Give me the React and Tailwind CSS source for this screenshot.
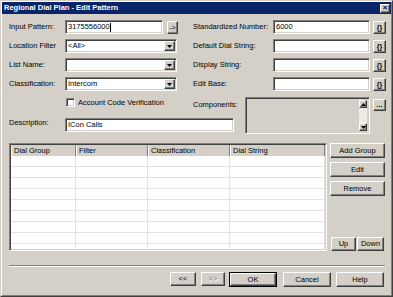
import React from "react";

const sunken =
  "border border-t-[#808080] border-l-[#808080] border-r-white border-b-white shadow-[inset_1px_1px_0_#404040,inset_-1px_-1px_0_#d4d0c8]";
const raised =
  "bg-[#d4d0c8] border border-t-white border-l-white border-r-[#404040] border-b-[#404040] shadow-[inset_-1px_-1px_0_#808080]";

function Btn({ className = "", children, disabled }) {
  return (
    <div
      className={`${raised} flex items-center justify-center leading-none ${
        disabled ? "text-[#808080] [text-shadow:1px_1px_0_#fff]" : "text-black"
      } ${className}`}
    >
      {children}
    </div>
  );
}

function Arrow({ up }) {
  return (
    <svg width="5" height="3" viewBox="0 0 5 3">
      <polygon points={up ? "0,3 5,3 2.5,0" : "0,0 5,0 2.5,3"} fill="#000" />
    </svg>
  );
}

function Combo({ value }) {
  return (
    <div className={`${sunken} bg-white w-[112px] h-[14px] flex items-center`}>
      <span className="flex-1 pl-[2px] leading-none">{value}</span>
      <Btn className="w-[11px] h-[10px] mr-[1px]">
        <Arrow />
      </Btn>
    </div>
  );
}

function Field({ value, w, caret }) {
  return (
    <div className={`${sunken} bg-white h-[14px] flex items-center ${w}`}>
      <span className="pl-[2px] leading-none">{value}</span>
      {caret && <span className="w-px h-[9px] bg-black"></span>}
    </div>
  );
}

function LeftRow({ label, children }) {
  return (
    <div className="flex items-center h-[14px]">
      <span className="w-[56px]">{label}</span>
      {children}
    </div>
  );
}

function RightRow({ label, value }) {
  return (
    <div className="flex items-center h-[14px]">
      <span className="w-[80px]">{label}</span>
      <Field value={value} w="w-[97px]" />
      <Btn className="ml-[3px] w-[13px] h-[13px] font-bold text-[7px]">{"{}"}</Btn>
    </div>
  );
}

export default function App() {
  const cols = ["Dial Group", "Filter", "Classification", "Dial String"];
  const widths = ["w-[65px]", "w-[72px]", "w-[82px]", "flex-1"];
  const rows = Array.from({ length: 9 });

  return (
    <div className="w-[393px] h-[297px] bg-[#d4d0c8] border border-t-[#d4d0c8] border-l-[#d4d0c8] border-r-[#404040] border-b-[#404040] font-['Liberation_Sans',Arial,sans-serif] text-[7.5px] text-black overflow-hidden">
      <div className="w-full h-full border border-t-white border-l-white border-r-[#808080] border-b-[#808080] flex flex-col">
        <div className="h-[12px] bg-[#0a246a] flex items-center justify-between pl-[2px] pr-[1px]">
          <span className="text-white font-bold leading-none">Regional Dial Plan - Edit Pattern</span>
          <Btn className="w-[10px] h-[9px] font-bold text-[8px]">×</Btn>
        </div>

        <div className="pl-[7px] pt-[6px] flex flex-col">
          <div className="flex">
            <div className="w-[169px] flex flex-col gap-[5px]">
              <LeftRow label="Input Pattern:">
                <Field value="3175556000" w="w-[98px]" caret />
                <Btn className="ml-[4px] w-[11px] h-[13px] text-[7px]">-&gt;</Btn>
              </LeftRow>
              <LeftRow label="Location Filter">
                <Combo value="<All>" />
              </LeftRow>
              <LeftRow label="List Name:">
                <Combo value="" />
              </LeftRow>
              <LeftRow label="Classification:">
                <Combo value="Intercom" />
              </LeftRow>
            </div>
            <div className="ml-[15px] flex flex-col gap-[5px]">
              <RightRow label="Standardized Number:" value="6000" />
              <RightRow label="Default Dial String:" value="" />
              <RightRow label="Display String:" value="" />
              <RightRow label="Edit Base:" value="" />
            </div>
          </div>

          <div className="mt-[6px] grid grid-cols-[56px_128px_52px_1fr] grid-rows-[11px_17px] gap-y-[9px]">
            <div></div>
            <div className="flex items-center gap-[3px] pl-[1px]">
              <span className={`${sunken} bg-white w-[9px] h-[9px]`}></span>
              <span>Account Code Verification</span>
            </div>
            <div className="pt-[2px]">Components:</div>
            <div className="row-span-2 flex items-start">
              <div className={`${sunken} bg-[#d4d0c8] w-[125px] h-[37px] flex justify-end p-[2px]`}>
                <div className="w-[8px] h-full flex flex-col bg-[#ecebe8]">
                  <Btn className="h-[8px]">
                    <Arrow up />
                  </Btn>
                  <div className="flex-1"></div>
                  <Btn className="h-[8px]">
                    <Arrow />
                  </Btn>
                </div>
              </div>
              <Btn className="ml-[3px] mt-[2px] w-[13px] h-[12px] font-bold">...</Btn>
            </div>
            <div className="self-start">Description:</div>
            <div className="col-span-2 mt-[1px]">
              <Field value="ICon Calls" w="w-[169px]" />
            </div>
          </div>

          <div className="mt-[9px] flex">
            <div className={`${sunken} bg-white w-[318px] h-[108px] overflow-hidden flex flex-col`}>
              <div className="flex h-[11px] shrink-0 bg-[#d4d0c8] m-[1px] mb-0">
                {cols.map((c, i) => (
                  <div
                    key={c}
                    className={`${widths[i]} h-full border-l border-l-white border-r border-r-[#808080] pl-[2px] flex items-center leading-none`}
                  >
                    {c}
                  </div>
                ))}
              </div>
              {rows.map((_, r) => (
                <div key={r} className="flex h-[11px] shrink-0 mx-[1px] border-b border-b-[#e4e2de]">
                  {cols.map((c, i) => (
                    <div key={c} className={`${widths[i]} h-full border-r border-r-[#e4e2de]`}></div>
                  ))}
                </div>
              ))}
            </div>
            <div className="ml-[3px] w-[55px] flex flex-col gap-[4px]">
              <Btn className="h-[15px]">Add Group</Btn>
              <Btn className="h-[15px]">Edit</Btn>
              <Btn className="h-[15px]">Remove</Btn>
              <div className="mt-auto flex gap-[1px]">
                <Btn className="w-[25px] h-[14px] ml-[1px]">Up</Btn>
                <Btn className="w-[27px] h-[14px]">Down</Btn>
              </div>
            </div>
          </div>

          <div className="mt-[14px] w-[376px] h-[2px] border-t border-t-[#808080] border-b border-b-white"></div>

          <div className="mt-[5px] flex">
            <Btn className="ml-[161px] w-[26px] h-[14px]">&lt;&lt;</Btn>
            <Btn className="ml-[5px] w-[24px] h-[14px]" disabled>&gt;&gt;</Btn>
            <div className="ml-[4px] w-[48px] h-[15px] border border-black flex">
              <Btn className="flex-1">OK</Btn>
            </div>
            <Btn className="ml-[6px] w-[48px] h-[15px]">Cancel</Btn>
            <Btn className="ml-[5px] w-[48px] h-[15px]">Help</Btn>
          </div>
        </div>
      </div>
    </div>
  );
}
